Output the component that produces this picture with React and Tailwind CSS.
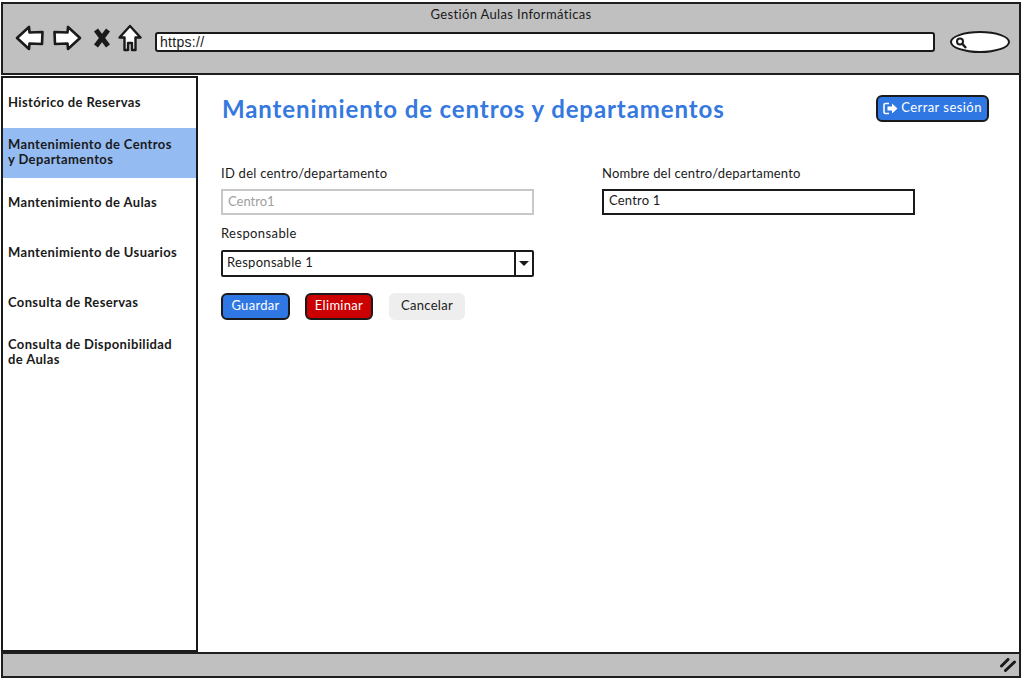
import React from 'react';

const navItems = [
  { label: 'Histórico de Reservas' },
  { label: 'Mantenimiento de Centros y Departamentos', active: true },
  { label: 'Mantenimiento de Aulas' },
  { label: 'Mantenimiento de Usuarios' },
  { label: 'Consulta de Reservas' },
  { label: 'Consulta de Disponibilidad de Aulas' },
];

const BackIcon = () => (
  <svg width="30" height="26" viewBox="0 0 30 26" fill="#fff" stroke="#1a1a1a" strokeWidth="2.6" strokeLinejoin="round">
    <path d="M2 13 L14 2 L14.5 7.5 L27.5 7 L27 19 L14.5 18.5 L14 24 Z" />
  </svg>
);

const ForwardIcon = () => (
  <svg width="30" height="26" viewBox="0 0 30 26" fill="#fff" stroke="#1a1a1a" strokeWidth="2.6" strokeLinejoin="round">
    <path d="M28 13 L16 2 L15.5 7.5 L2.5 7 L3 19 L15.5 18.5 L16 24 Z" />
  </svg>
);

const CloseIcon = () => (
  <svg width="18" height="20" viewBox="0 0 18 20" stroke="#1a1a1a" strokeWidth="5" fill="none">
    <path d="M3 2 L15 18" />
    <path d="M15 2 L3 18" />
  </svg>
);

const HomeIcon = () => (
  <svg width="24" height="28" viewBox="0 0 24 28" fill="#fff" stroke="#1a1a1a" strokeWidth="2.4" strokeLinejoin="round">
    <path d="M12 2 L22.5 13.5 L17.5 13.5 L17.5 26 L14 26 L14 19 L10 19 L10 26 L6.5 26 L6.5 13.5 L1.5 13.5 Z" />
  </svg>
);

const SearchIcon = () => (
  <svg width="12" height="13" viewBox="0 0 12 13" fill="none" stroke="#1a1a1a">
    <circle cx="5" cy="5.5" r="3" strokeWidth="2" />
    <path d="M7.5 8 L11 12" strokeWidth="2.4" />
  </svg>
);

const LogoutIcon = () => (
  <svg width="15" height="13" viewBox="0 0 15 13">
    <path d="M6 1.5 H2.5 Q1 1.5 1 3 V10 Q1 11.5 2.5 11.5 H6" fill="none" stroke="#ffffff" strokeWidth="1.6" />
    <path d="M4.5 4.5 H9 V1.5 L14.5 6.5 L9 11.5 V8.5 H4.5 Z" fill="#ffffff" />
  </svg>
);

const GripIcon = () => (
  <svg width="16" height="14" viewBox="0 0 16 14" stroke="#1a1a1a" strokeWidth="3" strokeLinecap="round" fill="none">
    <path d="M1.5 8 L8 1.5" />
    <path d="M5.5 12.5 L14.5 4" />
  </svg>
);

const App = () => {
  return (
    <div className="w-[1023px] h-[679px] bg-white flex flex-col pt-[2px] pl-[1px] font-['Lato',sans-serif] text-[#1a1a1a] overflow-hidden">
      <header className="h-[73px] w-[1020px] shrink-0 bg-[#c0c0c0] border-2 border-[#1f1f1f] flex flex-col">
        <div className="text-center text-[13px] leading-[16px] pt-[2px] tracking-[0.35px]">Gestión Aulas Informáticas</div>
        <div className="flex items-center pl-[12px]">
          <BackIcon />
          <span className="ml-[7px]"><ForwardIcon /></span>
          <span className="ml-[11px]"><CloseIcon /></span>
          <span className="ml-[7px]"><HomeIcon /></span>
          <div className="ml-[13px] mt-[9px] w-[780px] h-[20px] bg-white border-[2.5px] border-[#1a1a1a] rounded-[3px] text-[14px] leading-[16px] pl-[3px] tracking-[0.3px] font-['Liberation_Sans',sans-serif]">https://</div>
          <div className="ml-[15px] mt-[9px] w-[60px] h-[22px] bg-white border-[2.5px] border-[#1a1a1a] rounded-[50%] flex items-center pl-[3px]">
            <SearchIcon />
          </div>
        </div>
      </header>

      <div className="flex flex-1 min-h-0 w-[1020px]">
        <aside className="w-[197px] mt-[1px] shrink-0 border-2 border-[#1a1a1a] bg-white">
          {navItems.map((item) => (
            <div
              key={item.label}
              className={`h-[50px] flex items-center pl-[5px] pr-[16px] pb-[2px] text-[13px] leading-[15px] font-bold tracking-[0.37px] ${item.active ? 'bg-[#94bbf2]' : ''}`}
            >
              <span>{item.label}</span>
            </div>
          ))}
        </aside>

        <main className="flex-1 border-r-2 border-[#1a1a1a] pl-[24px] pt-[20px]">
          <div className="flex items-center justify-between pr-[30px]">
            <h1 className="text-[24px] leading-[30px] font-bold text-[#3478e0] tracking-[0.9px] mt-[-1px]">Mantenimiento de centros y departamentos</h1>
            <button className="w-[113px] h-[27px] mt-[-3px] bg-[#2f78e4] border-2 border-[#1a1a1a] rounded-[6px] text-white text-[13px] tracking-[0.45px] flex items-center justify-center gap-[3px]">
              <LogoutIcon />
              Cerrar sesión
            </button>
          </div>

          <div className="flex gap-[68px] mt-[41px] ml-[-1px]">
            <div className="w-[313px]">
              <label className="block text-[13px] leading-[16px] tracking-[0.25px]">ID del centro/departamento</label>
              <div className="mt-[8px] h-[26px] border-[2.5px] border-[#c8c8c8] text-[#a0a0a0] text-[13px] leading-[20px] pl-[5px]">Centro1</div>
              <label className="block mt-[10px] text-[13px] leading-[16px] tracking-[0.4px]">Responsable</label>
              <div className="mt-[9px] h-[27px] border-2 border-[#1a1a1a] rounded-[2px] flex text-[13px] leading-[21px] tracking-[0.3px]">
                <span className="flex-1 pl-[4px]">Responsable 1</span>
                <span className="w-[18px] border-l-2 border-[#1a1a1a] flex items-center justify-center">
                  <span className="w-0 h-0 border-x-[5px] border-x-transparent border-t-[5px] border-t-[#1a1a1a]" />
                </span>
              </div>
              <div className="flex mt-[16px] text-[13px] tracking-[0.3px]">
                <button className="w-[69px] h-[27px] pb-[1px] bg-[#2f78e4] text-white border-2 border-[#1a1a1a] rounded-[6px]">Guardar</button>
                <button className="ml-[15px] w-[68px] h-[27px] pb-[1px] bg-[#cc0000] text-white border-2 border-[#1a1a1a] rounded-[6px]">Eliminar</button>
                <button className="ml-[16px] w-[76px] h-[27px] pb-[1px] bg-[#eeeeee] rounded-[6px]">Cancelar</button>
              </div>
            </div>
            <div className="w-[313px]">
              <label className="block text-[13px] leading-[16px] tracking-[0.2px]">Nombre del centro/departamento</label>
              <div className="mt-[8px] h-[26px] border-2 border-[#1a1a1a] text-[13px] leading-[19px] pl-[5px] tracking-[0.2px]">Centro 1</div>
            </div>
          </div>
        </main>
      </div>

      <footer className="h-[26px] w-[1020px] shrink-0 mb-[1px] bg-[#c0c0c0] border-2 border-[#1f1f1f] flex items-center justify-end pr-[3px]">
        <GripIcon />
      </footer>
    </div>
  );
};

export default App;
